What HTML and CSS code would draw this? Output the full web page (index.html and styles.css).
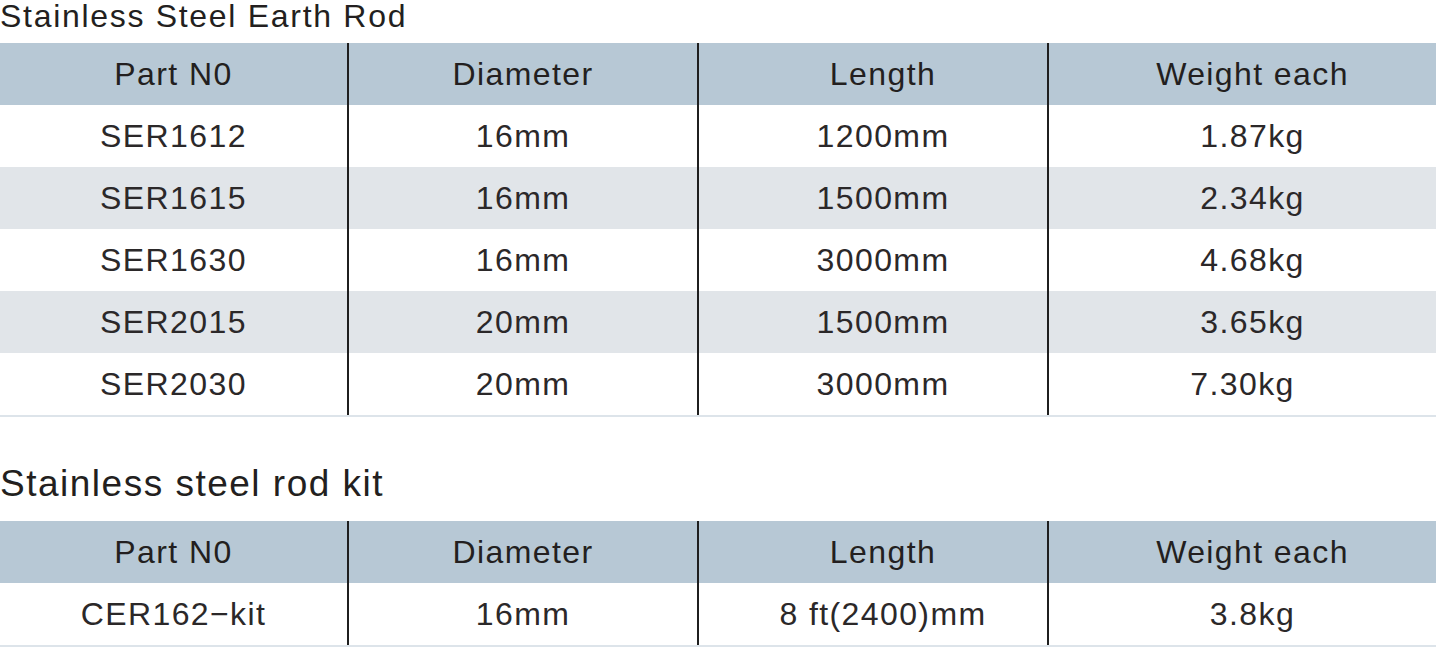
FILE: index.html
```html
<!DOCTYPE html>
<html lang="en">
<head>
<meta charset="utf-8">
<title>Stainless Steel Earth Rod</title>
<link rel="stylesheet" href="styles.css">
</head>
<body>
<section class="block">
  <h2 class="title title-a">Stainless Steel Earth Rod</h2>
  <div class="spec">
    <div class="row head">
      <div class="cell">Part N0</div>
      <div class="cell">Diameter</div>
      <div class="cell shift">Length</div>
      <div class="cell shift">Weight each</div>
    </div>
    <div class="row">
      <div class="cell">SER1612</div>
      <div class="cell">16mm</div>
      <div class="cell shift">1200mm</div>
      <div class="cell shift">1.87kg</div>
    </div>
    <div class="row alt">
      <div class="cell">SER1615</div>
      <div class="cell">16mm</div>
      <div class="cell shift">1500mm</div>
      <div class="cell shift">2.34kg</div>
    </div>
    <div class="row">
      <div class="cell">SER1630</div>
      <div class="cell">16mm</div>
      <div class="cell shift">3000mm</div>
      <div class="cell shift">4.68kg</div>
    </div>
    <div class="row alt">
      <div class="cell">SER2015</div>
      <div class="cell">20mm</div>
      <div class="cell shift">1500mm</div>
      <div class="cell shift">3.65kg</div>
    </div>
    <div class="row">
      <div class="cell">SER2030</div>
      <div class="cell">20mm</div>
      <div class="cell shift">3000mm</div>
      <div class="cell">7.30kg</div>
    </div>
  </div>
</section>
<section class="block second">
  <h2 class="title title-b">Stainless steel rod kit</h2>
  <div class="spec">
    <div class="row head">
      <div class="cell">Part N0</div>
      <div class="cell">Diameter</div>
      <div class="cell shift">Length</div>
      <div class="cell shift">Weight each</div>
    </div>
    <div class="row">
      <div class="cell">CER162−kit</div>
      <div class="cell">16mm</div>
      <div class="cell shift">8 ft(2400)mm</div>
      <div class="cell shift">3.8kg</div>
    </div>
  </div>
</section>
</body>
</html>
```
FILE: styles.css
```css
html, body {
  margin: 0;
  padding: 0;
  background: #ffffff;
}

body {
  font-family: "Liberation Sans", Arial, sans-serif;
  color: #231f20;
  width: 1439px;
  overflow: hidden;
}

.block {
  width: 1436px;
}

.second {
  margin-top: 48px;
}

.title {
  margin: 0;
  font-weight: normal;
  white-space: nowrap;
  color: #231f20;
}

.title-a {
  font-size: 32px;
  line-height: 32px;
  letter-spacing: 1.7px;
  margin-bottom: 11px;
}

.title-b {
  font-size: 37px;
  line-height: 37px;
  letter-spacing: 1.5px;
  margin-bottom: 19px;
}

.spec {
  border-bottom: 2px solid #dde4ea;
}

.row {
  display: grid;
  grid-template-columns: 347px 350px 350px 389px;
  height: 62px;
  background: #ffffff;
}

.row.head {
  background: #b7c8d5;
}

.row.alt {
  background: #e1e5e9;
}

.cell {
  box-sizing: border-box;
  height: 62px;
  line-height: 62px;
  font-size: 32px;
  letter-spacing: 1.4px;
  text-align: center;
  white-space: nowrap;
  color: #2b2829;
}

.head .cell {
  color: #231f20;
}

.cell + .cell {
  border-left: 2px solid #1f1f1f;
}

.cell.shift {
  padding-left: 20px;
}
```
